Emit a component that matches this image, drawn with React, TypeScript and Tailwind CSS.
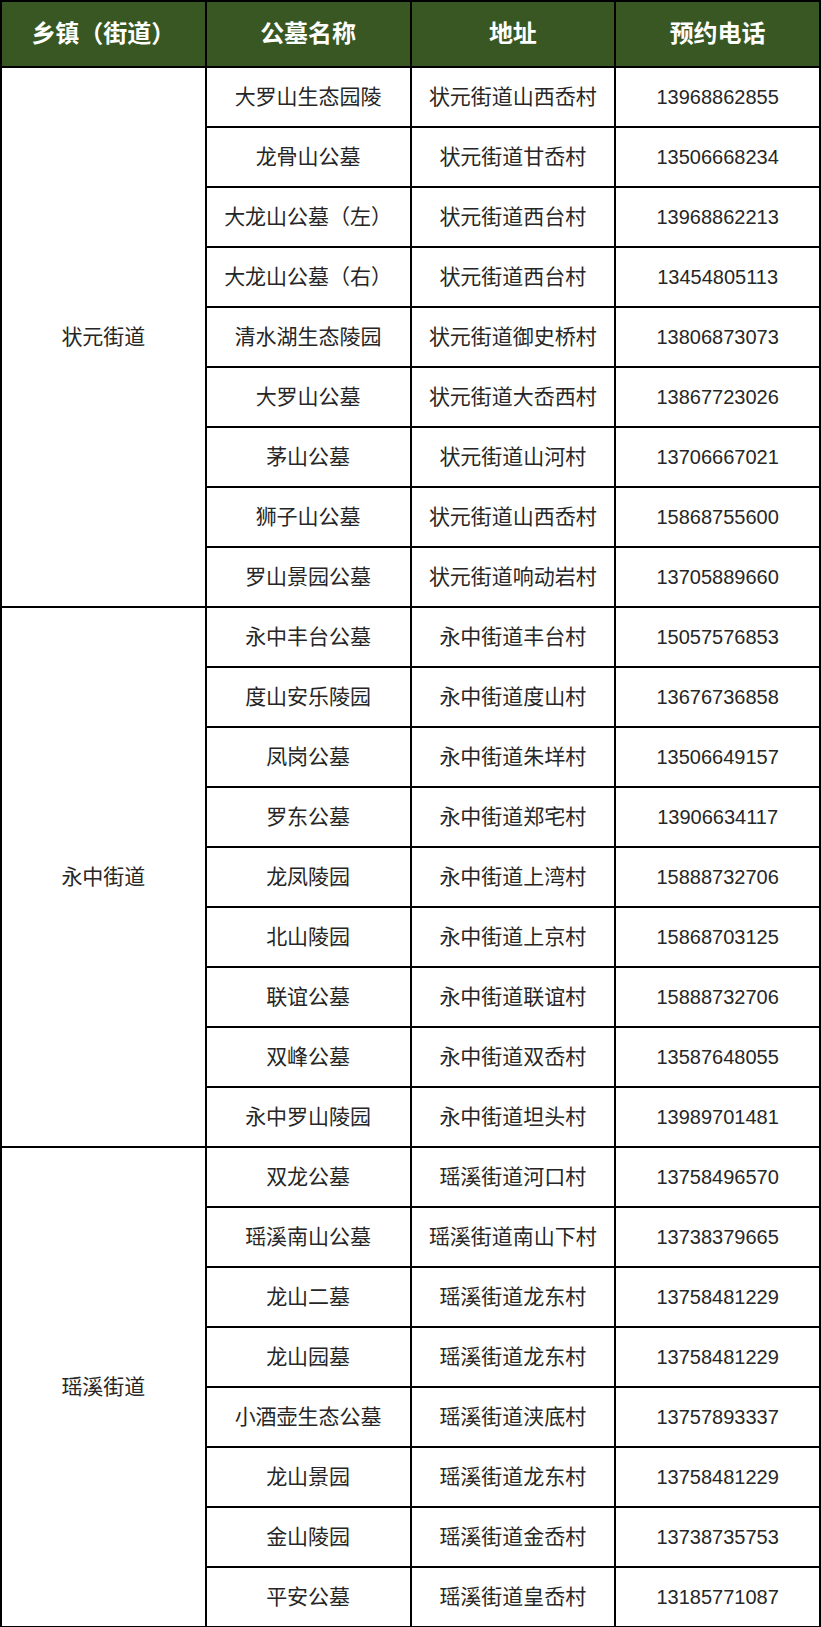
const groups = [
  {
    town: "状元街道",
    rows: [
      ["大罗山生态园陵", "状元街道山西岙村", "13968862855"],
      ["龙骨山公墓", "状元街道甘岙村", "13506668234"],
      ["大龙山公墓（左）", "状元街道西台村", "13968862213"],
      ["大龙山公墓（右）", "状元街道西台村", "13454805113"],
      ["清水湖生态陵园", "状元街道御史桥村", "13806873073"],
      ["大罗山公墓", "状元街道大岙西村", "13867723026"],
      ["茅山公墓", "状元街道山河村", "13706667021"],
      ["狮子山公墓", "状元街道山西岙村", "15868755600"],
      ["罗山景园公墓", "状元街道响动岩村", "13705889660"],
    ],
  },
  {
    town: "永中街道",
    rows: [
      ["永中丰台公墓", "永中街道丰台村", "15057576853"],
      ["度山安乐陵园", "永中街道度山村", "13676736858"],
      ["凤岗公墓", "永中街道朱垟村", "13506649157"],
      ["罗东公墓", "永中街道郑宅村", "13906634117"],
      ["龙凤陵园", "永中街道上湾村", "15888732706"],
      ["北山陵园", "永中街道上京村", "15868703125"],
      ["联谊公墓", "永中街道联谊村", "15888732706"],
      ["双峰公墓", "永中街道双岙村", "13587648055"],
      ["永中罗山陵园", "永中街道坦头村", "13989701481"],
    ],
  },
  {
    town: "瑶溪街道",
    rows: [
      ["双龙公墓", "瑶溪街道河口村", "13758496570"],
      ["瑶溪南山公墓", "瑶溪街道南山下村", "13738379665"],
      ["龙山二墓", "瑶溪街道龙东村", "13758481229"],
      ["龙山园墓", "瑶溪街道龙东村", "13758481229"],
      ["小酒壶生态公墓", "瑶溪街道浃底村", "13757893337"],
      ["龙山景园", "瑶溪街道龙东村", "13758481229"],
      ["金山陵园", "瑶溪街道金岙村", "13738735753"],
      ["平安公墓", "瑶溪街道皇岙村", "13185771087"],
    ],
  },
]

const headers = ["乡镇（街道）", "公墓名称", "地址", "预约电话"]

export default function App() {
  return (
    <div className="w-[821px] bg-white font-['Liberation_Sans','Noto_Sans_CJK_SC',sans-serif]">
      <table className="w-[821px] table-fixed border-collapse border-2 border-black">
        <thead>
          <tr className="h-[66px] bg-[#385723]">
            {headers.map((h) => (
              <th key={h} className="border-2 border-black text-[24px] font-bold text-white text-center">
                {h}
              </th>
            ))}
          </tr>
        </thead>
        <tbody>
          {groups.map((g) =>
            g.rows.map((r, i) => (
              <tr key={g.town + i} className="h-[60px]">
                {i === 0 && (
                  <td rowSpan={g.rows.length} className="border-2 border-black text-center text-[21px] text-[#262626]">
                    {g.town}
                  </td>
                )}
                <td className="border-2 border-black text-center text-[21px] text-[#262626]">{r[0]}</td>
                <td className="border-2 border-black text-center text-[21px] text-[#262626]">{r[1]}</td>
                <td className="border-2 border-black text-center text-[20px] text-[#262626]">{r[2]}</td>
              </tr>
            ))
          )}
        </tbody>
      </table>
    </div>
  )
}
